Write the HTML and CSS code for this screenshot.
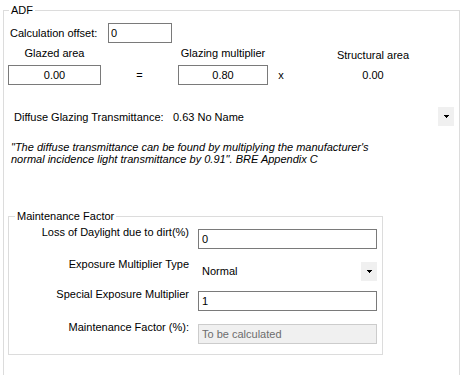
FILE: index.html
```html
<!DOCTYPE html>
<html lang="en">
<head>
    <meta charset="UTF-8">
    <title>ADF</title>
    <link rel="stylesheet" href="styles.css">
</head>
<body>
    <fieldset class="group adf">
        <legend>ADF</legend>

        <div class="offset-row">
            <label for="offset" class="offset-label">Calculation offset:</label>
            <input type="text" id="offset" class="box offset-box" value="0">
        </div>

        <div class="calc-grid">
            <span class="calc-label">Glazed area</span>
            <span></span>
            <span class="calc-label">Glazing multiplier</span>
            <span></span>
            <span class="calc-label structural">Structural area</span>

            <input type="text" class="box num" value="0.00">
            <span class="op">=</span>
            <input type="text" class="box num" value="0.80">
            <span class="op">x</span>
            <span class="op">0.00</span>
        </div>

        <div class="diffuse-row">
            <span class="diffuse-label">Diffuse Glazing Transmittance:</span>
            <span class="diffuse-value">0.63 No Name</span>
            <span class="combo-btn">
                <svg width="5" height="3" viewBox="0 0 5 3" shape-rendering="crispEdges">
                    <rect x="0" y="0" width="5" height="1" fill="#000"/>
                    <rect x="1" y="1" width="3" height="1" fill="#000"/>
                    <rect x="2" y="2" width="1" height="1" fill="#000"/>
                </svg>
            </span>
        </div>

        <p class="note">"The diffuse transmittance can be found by multiplying the manufacturer's<br>normal incidence light transmittance by 0.91". BRE Appendix C</p>

        <fieldset class="group maint">
            <legend>Maintenance Factor</legend>
            <div class="maint-grid">
                <label for="dirt">Loss of Daylight due to dirt(%)</label>
                <input type="text" id="dirt" class="box" value="0">

                <label>Exposure Multiplier Type</label>
                <div class="combo">
                    <span>Normal</span>
                    <span class="combo-btn">
                        <svg width="5" height="3" viewBox="0 0 5 3" shape-rendering="crispEdges">
                            <rect x="0" y="0" width="5" height="1" fill="#000"/>
                            <rect x="1" y="1" width="3" height="1" fill="#000"/>
                            <rect x="2" y="2" width="1" height="1" fill="#000"/>
                        </svg>
                    </span>
                </div>

                <label for="special">Special Exposure Multiplier</label>
                <input type="text" id="special" class="box" value="1">

                <label for="mf">Maintenance Factor (%):</label>
                <input type="text" id="mf" class="box disabled" value="To be calculated" disabled>
            </div>
        </fieldset>
    </fieldset>
</body>
</html>
```

FILE: styles.css
```css
body {
    margin: 0;
    font-family: "Liberation Sans", Arial, sans-serif;
    font-size: 11px;
    color: #000;
    background-color: #fff;
}

.group {
    border: 1px solid #dcdcdc;
    padding: 0;
    margin: 0;
    min-width: 0;
    box-sizing: border-box;
}

.group legend {
    padding: 0 2px;
    line-height: 12px;
}

/* bottom edge sits just below the window */
.adf {
    margin: 4px 5px 0 3px;
    height: 372px;
}

.adf > legend {
    margin-left: 5px;
}

/* text boxes */
.box {
    box-sizing: border-box;
    height: 20px;
    margin: 0;
    padding: 0 2px;
    border: 1px solid #7a7a7a;
    background-color: #fff;
    color: #000;
    font: inherit;
    outline: none;
}

.box.disabled {
    background-color: #f0f0f0;
    border-color: #cccccc;
    color: #6d6d6d;
}

.offset-row {
    display: flex;
    align-items: center;
    margin: 7px 0 0 6px;
}

.offset-label {
    width: 98px;
}

.offset-box {
    width: 64px;
}

.calc-grid {
    display: grid;
    grid-template-columns: 93px 77px 90px 26px 158px;
    grid-template-rows: 13px 20px;
    row-gap: 5px;
    margin: 4px 0 0 4px;
    line-height: 13px;
}

.calc-label {
    text-align: center;
}

.calc-label.structural {
    padding-top: 2px;
}

.num {
    width: 100%;
    text-align: center;
}

.op {
    display: flex;
    align-items: center;
    justify-content: center;
}

.diffuse-row {
    display: flex;
    align-items: center;
    height: 19px;
    margin: 22px 5px 0 0;
    padding-left: 10px;
}

.diffuse-label {
    width: 159px;
}

.diffuse-row .combo-btn {
    margin-left: auto;
}

.combo-btn {
    display: flex;
    align-items: center;
    justify-content: center;
    width: 16px;
    height: 19px;
    background-color: #f0f0f0;
}

.note {
    margin: 15px 0 0 7px;
    line-height: 12px;
    font-style: italic;
}

.maint {
    width: 375px;
    margin: 45px 0 0 4px;
}

.maint > legend {
    margin-left: 6px;
}

.maint-grid {
    display: grid;
    grid-template-columns: 180px 179px;
    grid-template-rows: 32px 30px 33px 20px;
    column-gap: 9px;
    align-items: start;
    padding: 7px 0 10px 0;
}

.maint-grid label {
    text-align: right;
    line-height: 13px;
    margin-top: -3px;
}

.maint-grid .box {
    width: 100%;
    padding-left: 3px;
}

.combo {
    display: flex;
    align-items: center;
    justify-content: space-between;
    height: 20px;
    padding-left: 4px;
}
```
